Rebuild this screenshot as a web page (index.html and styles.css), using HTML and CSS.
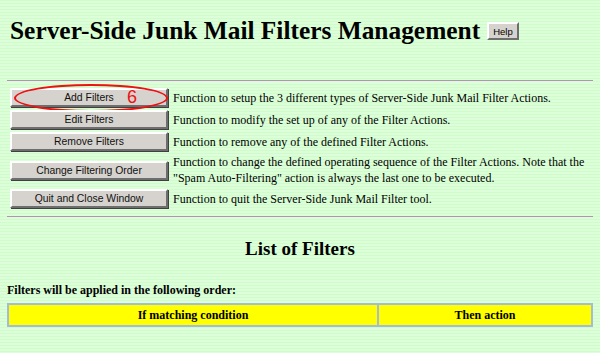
FILE: index.html
```html
<!DOCTYPE html>
<html>
<head>
<meta charset="utf-8">
<link rel="stylesheet" href="styles.css">
</head>
<body>
<div class="header">
  <h1 class="title">Server-Side Junk Mail Filters Management</h1>
  <button class="help-btn">Help</button>
</div>
<hr class="rule rule-top">
<div class="actions">
  <div class="btn-cell first">
    <button class="btn">Add Filters</button>
    <div class="mark-ellipse"></div>
    <span class="mark-num">6</span>
  </div>
  <div class="desc">Function to setup the 3 different types of Server-Side Junk Mail Filter Actions.</div>
  <div class="btn-cell"><button class="btn">Edit Filters</button></div>
  <div class="desc">Function to modify the set up of any of the Filter Actions.</div>
  <div class="btn-cell"><button class="btn">Remove Filters</button></div>
  <div class="desc">Function to remove any of the defined Filter Actions.</div>
  <div class="btn-cell"><button class="btn">Change Filtering Order</button></div>
  <div class="desc">Function to change the defined operating sequence of the Filter Actions. Note that the<br>"Spam Auto-Filtering" action is always the last one to be executed.</div>
  <div class="btn-cell"><button class="btn">Quit and Close Window</button></div>
  <div class="desc">Function to quit the Server-Side Junk Mail Filter tool.</div>
</div>
<hr class="rule rule-bottom">
<h2 class="list-title">List of Filters</h2>
<p class="order-note">Filters will be applied in the following order:</p>
<table class="filters">
  <tr>
    <th class="col-cond">If matching condition</th>
    <th class="col-action">Then action</th>
  </tr>
</table>
</body>
</html>
```

FILE: styles.css
```css
html, body {
  margin: 0;
  padding: 0;
}
body {
  padding: 0 7px;
  font-family: "Liberation Serif", "Times New Roman", serif;
  color: #000;
  background-color: #d3fdcf;
  background-image: repeating-linear-gradient(180deg, #d0fbcb 0px, #d0fbcb 1px, #dcffd9 1px, #dcffd9 3px);
  min-height: 353px;
  box-sizing: border-box;
}
.header {
  display: flex;
  align-items: center;
  gap: 7px;
  padding-top: 14px;
  height: 32px;
}
.title {
  margin: 0;
  font-size: 25.4px;
  font-weight: bold;
  line-height: 32px;
  padding-left: 3px;
}
.help-btn {
  font-family: "Liberation Sans", Arial, sans-serif;
  font-size: 9.5px;
  height: 18px;
  padding: 0 4px;
  background: #d6d3ce;
  border: 2px solid;
  border-color: #ffffff #6e6e6e #6e6e6e #ffffff;
  color: #000;
  margin-top: 2px;
}
.rule {
  margin: 0;
  border: 0;
  border-top: 1px solid #a0a0a0;
  border-bottom: 1px solid #eeeeee;
  height: 0;
}
.rule-top {
  margin-top: 34px;
}
.actions {
  display: grid;
  grid-template-columns: 161px 1fr;
  row-gap: 3px;
  column-gap: 2px;
  padding-top: 6px;
  padding-left: 3px;
}
.btn-cell {
  display: flex;
  align-items: center;
  position: relative;
}
.btn {
  width: 158px;
  height: 19px;
  padding: 0;
  font-family: "Liberation Sans", Arial, sans-serif;
  font-size: 10.4px;
  color: #111;
  background: #d6d3ce;
  border: 2px solid;
  border-color: #ffffff #6e6e6e #6e6e6e #ffffff;
  box-shadow: 1px 1px 0 #404040;
}
.desc {
  font-size: 12px;
  line-height: 16px;
  display: flex;
  flex-direction: column;
  justify-content: center;
}
.mark-ellipse {
  position: absolute;
  left: 4px;
  top: -4px;
  width: 150px;
  height: 24px;
  border: 2px solid #ee1111;
  border-radius: 50%;
}
.mark-num {
  position: absolute;
  left: 117px;
  top: 0px;
  font-family: "Liberation Sans", Arial, sans-serif;
  font-size: 18px;
  line-height: 19px;
  color: #ee1111;
}
.rule-bottom {
  margin-top: 8px;
}
.list-title {
  margin: 19px 0 0;
  text-align: center;
  font-size: 19px;
  line-height: 24px;
  font-weight: bold;
}
.order-note {
  margin: 21px 0 0;
  font-size: 12px;
  font-weight: bold;
  line-height: 16px;
}
.filters {
  width: 100%;
  margin-top: 5px;
  border-collapse: collapse;
  border: 2px solid #a5bcd8;
}
.filters th {
  background: #ffff00;
  border: 2px solid #a5bcd8;
  height: 20px;
  padding: 0;
  font-size: 12px;
  font-weight: bold;
}
.col-cond {
  width: 368px;
}
```
